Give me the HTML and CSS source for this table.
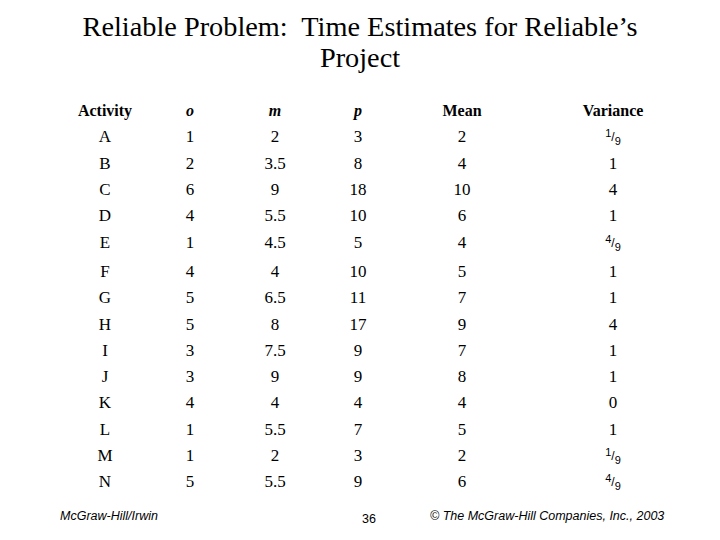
FILE: index.html
```html
<!DOCTYPE html>
<html>
<head>
<meta charset="utf-8">
<link rel="stylesheet" href="styles.css">
</head>
<body>
<div class="slide">
  <h1 class="title">Reliable Problem:&nbsp; Time Estimates for Reliable’s<br>Project</h1>
  <div class="table">
    <div class="row head">
      <span>Activity</span><span class="it">o</span><span class="it">m</span><span class="it">p</span><span>Mean</span><span>Variance</span>
    </div>
    <div class="row"><span>A</span><span>1</span><span>2</span><span>3</span><span>2</span><span class="frac"><sup>1</sup>/<sub>9</sub></span></div>
    <div class="row"><span>B</span><span>2</span><span>3.5</span><span>8</span><span>4</span><span>1</span></div>
    <div class="row"><span>C</span><span>6</span><span>9</span><span>18</span><span>10</span><span>4</span></div>
    <div class="row"><span>D</span><span>4</span><span>5.5</span><span>10</span><span>6</span><span>1</span></div>
    <div class="row"><span>E</span><span>1</span><span>4.5</span><span>5</span><span>4</span><span class="frac"><sup>4</sup>/<sub>9</sub></span></div>
    <div class="row gap"><span>F</span><span>4</span><span>4</span><span>10</span><span>5</span><span>1</span></div>
    <div class="row"><span>G</span><span>5</span><span>6.5</span><span>11</span><span>7</span><span>1</span></div>
    <div class="row"><span>H</span><span>5</span><span>8</span><span>17</span><span>9</span><span>4</span></div>
    <div class="row"><span>I</span><span>3</span><span>7.5</span><span>9</span><span>7</span><span>1</span></div>
    <div class="row"><span>J</span><span>3</span><span>9</span><span>9</span><span>8</span><span>1</span></div>
    <div class="row"><span>K</span><span>4</span><span>4</span><span>4</span><span>4</span><span>0</span></div>
    <div class="row"><span>L</span><span>1</span><span>5.5</span><span>7</span><span>5</span><span>1</span></div>
    <div class="row"><span>M</span><span>1</span><span>2</span><span>3</span><span>2</span><span class="frac"><sup>1</sup>/<sub>9</sub></span></div>
    <div class="row"><span>N</span><span>5</span><span>5.5</span><span>9</span><span>6</span><span class="frac"><sup>4</sup>/<sub>9</sub></span></div>
  </div>
  <div class="footer">
    <span class="left">McGraw-Hill/Irwin</span>
    <span class="page">36</span>
    <span class="right">© The McGraw-Hill Companies, Inc., 2003</span>
  </div>
</div>
</body>
</html>
```

FILE: styles.css
```css
html, body {
  margin: 0;
  padding: 0;
  background: #ffffff;
}
.slide {
  width: 720px;
  height: 540px;
  color: #000;
  font-family: "Liberation Serif", "Times New Roman", serif;
  box-sizing: border-box;
  padding-top: 11px;
}
.title {
  margin: 0;
  font-weight: normal;
  font-size: 28.3px;
  line-height: 31px;
  text-align: center;
}
.table {
  margin-top: 25px;
  padding-left: 60px;
}
.row {
  display: grid;
  grid-template-columns: 90px 80px 90px 76px 132px 170px;
  height: 26.3px;
  align-items: center;
  font-size: 17px;
}
.row span {
  text-align: center;
  line-height: 20px;
}
.row.head {
  font-weight: bold;
  font-size: 16px;
}
.row .it {
  font-style: italic;
}
.row.gap {
  margin-top: 3px;
}
.frac {
  font-family: "Liberation Sans", Arial, sans-serif;
  font-size: 12px;
}
.frac sup, .frac sub {
  font-size: 11px;
  line-height: 0;
}
.frac sup {
  vertical-align: 4px;
}
.frac sub {
  vertical-align: -4px;
}
.footer {
  display: grid;
  grid-template-columns: 300px 70px auto;
  padding-left: 60px;
  margin-top: 14px;
  font-family: "Liberation Sans", Arial, sans-serif;
  font-size: 12.5px;
  line-height: 14px;
}
.footer .left, .footer .right {
  font-style: italic;
}
.footer .page {
  padding-top: 3px;
  padding-left: 2px;
}
```
